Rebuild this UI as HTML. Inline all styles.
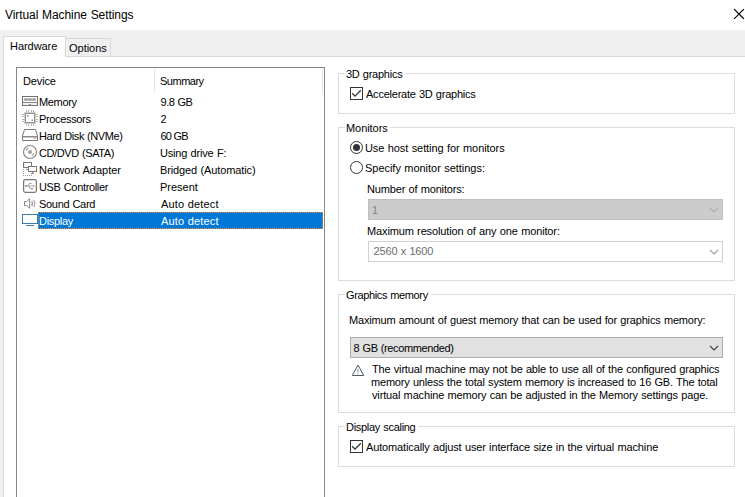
<!DOCTYPE html>
<html lang="en">
<head>
<meta charset="utf-8">
<title>Virtual Machine Settings</title>
<style>
html,body{margin:0;padding:0;}
body{width:745px;height:497px;overflow:hidden;background:#fff;position:relative;font-family:"Liberation Sans",Arial,sans-serif;font-size:11px;color:#000;}
*{box-sizing:border-box;}
div,span,svg,label{position:absolute;}
svg{overflow:visible;}
.t{white-space:pre;line-height:14px;height:14px;word-spacing:0.45px;}
.window{left:0;top:0;width:745px;height:497px;overflow:hidden;}
.titlebar{left:0;top:0;width:745px;height:30px;background:#fff;}
.title{font-size:12px;}
.client{left:0;top:30px;width:745px;height:467px;background:#f0f0f0;}
.tabpage{left:3px;top:26px;width:745px;height:445px;background:#fff;border-left:1px solid #d9d9d9;border-top:1px solid #d9d9d9;}
.tab{border:1px solid #d9d9d9;border-bottom:none;}
.tab.active{left:3px;top:6px;width:63px;height:21px;background:#fff;}
.tab.inactive{left:65px;top:8px;width:46px;height:18px;background:#f0f0f0;}
.listview{left:12px;top:10px;width:309px;height:440px;border:1px solid #828790;background:#fff;}
.lv-header{left:0;top:0;width:307px;height:25px;}
.colsep{width:1px;top:1px;height:24px;background:#e5e5e5;}
.lv-row{left:0;width:307px;height:17px;}
.lv-row .hl{left:21px;top:0;width:285px;height:17px;background:#0078d7;border:1px dotted #ff8728;}
.lv-row.selected .t{color:#fff;}
.icon{width:16px;height:16px;}
.group{left:334px;width:397px;border:1px solid #dcdcdc;}
.legend-gap{left:6px;top:-2px;height:3px;background:#fff;}
.chk{left:11px;width:13px;height:13px;border:1px solid #333;background:#fff;}
.radio{left:11px;width:13px;height:13px;border:1px solid #333;border-radius:50%;background:#fff;}
.radio.on:after{content:"";position:absolute;left:2px;top:2px;width:7px;height:7px;border-radius:50%;background:#333;}
.combo{height:21px;border:1px solid #adadad;background:#e1e1e1;}
.combo.disabled{background:#ccc;border-color:#bfbfbf;color:#838383;}
.combo.readonly{background:#fff;border-color:#d0d0d0;color:#6d6d6d;}
.chev{right:3px;top:8px;}
</style>
</head>
<body>
<div class="window">
<div class="titlebar">
<span class="t title" style="left:5px;top:8px;letter-spacing:-0.067px;">Virtual Machine Settings</span>
<svg class="closebtn" style="left:734px;top:9px" width="11" height="11" viewBox="0 0 11 11"><path d="M0.500 0.500 L9.500 9.500 M9.500 0.500 L0.500 9.500" stroke="#000" stroke-width="1.100" stroke-linecap="square" fill="none"/></svg>
</div>
<div class="client">
<div class="tabpage">
<div class="listview">
<div class="lv-header">
<span class="t col" style="left:6px;top:6px;letter-spacing:-0.137px;">Device</span>
<div class="colsep" style="left:137px"></div>
<span class="t col" style="left:143px;top:6px;letter-spacing:-0.495px;">Summary</span>
<div class="colsep" style="left:305px"></div>
</div>
<div class="lv-row" style="top:25px">
<svg class="icon" style="left:5px;top:0px" viewBox="0 0 16 16"><rect x="0.5" y="3.5" width="15" height="9" fill="#fff" stroke="#707070"/><rect x="2" y="5" width="12" height="3" fill="#dedede"/><g fill="#b9b9b9"><rect x="2.200" y="5" width="3.300" height="3"/><rect x="6.300" y="5" width="3.300" height="3"/><rect x="10.400" y="5" width="3.300" height="3"/></g><g fill="#9a9a9a"><rect x="2.200" y="6" width="3.300" height="1"/><rect x="6.300" y="6" width="3.300" height="1"/><rect x="10.400" y="6" width="3.300" height="1"/></g><rect x="1" y="9" width="14" height="1" fill="#8c8c8c"/><rect x="1" y="10" width="14" height="2" fill="#eef1f4"/><rect x="7" y="11" width="2" height="1" fill="#8a8a8a"/></svg>
<span class="t dev" style="left:22px;top:2px;letter-spacing:-0.356px;">Memory</span>
<span class="t sum" style="left:143.6px;top:2px;letter-spacing:-0.475px;">9.8 GB</span>
</div>
<div class="lv-row" style="top:42px">
<svg class="icon" style="left:5px;top:0px" viewBox="0 0 16 16"><g fill="#b4b4b4"><rect x="4" y="0" width="1" height="2"/><rect x="6" y="0" width="1" height="2"/><rect x="9" y="0" width="1" height="2"/><rect x="11" y="0" width="1" height="2"/><rect x="4" y="14" width="1" height="2"/><rect x="6" y="14" width="1" height="2"/><rect x="9" y="14" width="1" height="2"/><rect x="11" y="14" width="1" height="2"/><rect x="0" y="4" width="2" height="1"/><rect x="0" y="6" width="2" height="1"/><rect x="0" y="9" width="2" height="1"/><rect x="0" y="11" width="2" height="1"/><rect x="14" y="4" width="2" height="1"/><rect x="14" y="6" width="2" height="1"/><rect x="14" y="9" width="2" height="1"/><rect x="14" y="11" width="2" height="1"/></g><rect x="2.5" y="2.5" width="11" height="11" fill="#fff" stroke="#cfcfcf"/><rect x="3.5" y="3.5" width="9" height="9" fill="#fff" stroke="#929292"/><rect x="5" y="5" width="1.600" height="1.600" fill="#9c9c9c"/><rect x="9.400" y="9.400" width="1.600" height="1.600" fill="#9c9c9c"/></svg>
<span class="t dev" style="left:22px;top:2px;letter-spacing:-0.343px;">Processors</span>
<span class="t sum" style="left:143.6px;top:2px;">2</span>
</div>
<div class="lv-row" style="top:59px">
<svg class="icon" style="left:5px;top:0px" viewBox="0 0 16 16"><path d="M2.5 2.500 H13.500 L15.500 9 V13.500 H0.500 V9 Z" fill="#fff" stroke="#7a7a7a"/><rect x="1" y="9" width="14" height="1" fill="#8c8c8c"/><rect x="1" y="10" width="14" height="1" fill="#c4c4c4"/><rect x="11.500" y="11" width="2.500" height="1" fill="#b0b0b0"/></svg>
<span class="t dev" style="left:22px;top:2px;letter-spacing:-0.415px;">Hard Disk (NVMe)</span>
<span class="t sum" style="left:143.6px;top:2px;letter-spacing:-0.907px;">60 GB</span>
</div>
<div class="lv-row" style="top:76px">
<svg class="icon" style="left:5px;top:0px" viewBox="0 0 16 16"><circle cx="8" cy="8" r="6.500" fill="#fff" stroke="#868686" stroke-width="1.150"/><circle cx="8" cy="8" r="2" fill="#a2a2a2"/><path d="M4.100 6.600 A4.200 4.200 0 0 1 6.300 4.200" fill="none" stroke="#8e8e8e" stroke-width="1.100"/><path d="M11.900 9.400 A4.200 4.200 0 0 1 9.700 11.800" fill="none" stroke="#8e8e8e" stroke-width="1.100"/></svg>
<span class="t dev" style="left:22px;top:2px;letter-spacing:-0.389px;">CD/DVD (SATA)</span>
<span class="t sum" style="left:143px;top:2px;letter-spacing:-0.175px;">Using drive F:</span>
</div>
<div class="lv-row" style="top:93px">
<svg class="icon" style="left:5px;top:0px" viewBox="0 0 16 16"><rect x="1.500" y="1.500" width="8" height="5" fill="#fff" stroke="#787878"/><rect x="4" y="8" width="2" height="1" fill="#909090"/><rect x="6.500" y="5.500" width="8" height="5" fill="#fff" stroke="#787878"/><rect x="10" y="11" width="1" height="1" fill="#888"/><rect x="9" y="12" width="3" height="1" fill="#8c8c8c"/><g fill="#9c9c9c"><rect x="1" y="8" width="1" height="1"/><rect x="1" y="10" width="1" height="1"/><rect x="1" y="12" width="1" height="1"/><rect x="1" y="14" width="1" height="1"/><rect x="3" y="14" width="1" height="1"/><rect x="5" y="14" width="1" height="1"/><rect x="7" y="14" width="1" height="1"/><rect x="9" y="14" width="1" height="1"/></g></svg>
<span class="t dev" style="left:22px;top:2px;letter-spacing:0.018px;">Network Adapter</span>
<span class="t sum" style="left:143px;top:2px;letter-spacing:-0.117px;">Bridged (Automatic)</span>
</div>
<div class="lv-row" style="top:110px">
<svg class="icon" style="left:5px;top:0px" viewBox="0 0 16 16"><rect x="1.600" y="1.600" width="12.800" height="12.800" rx="1.800" fill="#fff" stroke="#787878" stroke-width="1.250"/><path d="M4 8 H12" stroke="#a8a8a8" fill="none"/><path d="M5.800 8 L7.300 5.500 H9.500" stroke="#9a9a9a" fill="none"/><path d="M6.800 8 L8.300 10.700 H10.500" stroke="#9a9a9a" fill="none"/><circle cx="4" cy="8" r="1" fill="#909090"/><path d="M11 6.800 L12.800 8 L11 9.200 Z" fill="#909090"/><rect x="9.500" y="10" width="1.500" height="1.500" fill="#a0a0a0"/></svg>
<span class="t dev" style="left:22px;top:2px;letter-spacing:-0.34px;">USB Controller</span>
<span class="t sum" style="left:143px;top:2px;letter-spacing:-0.003px;">Present</span>
</div>
<div class="lv-row" style="top:127px">
<svg class="icon" style="left:5px;top:0px" viewBox="0 0 16 16"><path d="M2.500 6.500 H4.700 L7.700 3.700 V13.300 L4.700 10.500 H2.500 Z" fill="#fff" stroke="#858585"/><path d="M9.800 6 Q11.100 8.500 9.800 11" fill="none" stroke="#8e8e8e" stroke-width="1.100"/><path d="M11.700 4.800 Q14 8.500 11.700 12.200" fill="none" stroke="#a2a2a2" stroke-width="1.100"/></svg>
<span class="t dev" style="left:22px;top:2px;letter-spacing:-0.312px;">Sound Card</span>
<span class="t sum" style="left:144px;top:2px;letter-spacing:0.14px;">Auto detect</span>
</div>
<div class="lv-row selected" style="top:144px">
<div class="hl"></div>
<svg class="icon" style="left:5px;top:0px" viewBox="0 0 16 16"><rect x="0.5" y="2.5" width="15" height="9" fill="#fff" stroke="#3c78b4"/><rect x="4" y="13" width="8" height="1" fill="#3c78b4"/></svg>
<span class="t dev" style="left:22px;top:2px;letter-spacing:-0.297px;">Display</span>
<span class="t sum" style="left:144px;top:2px;letter-spacing:0.14px;">Auto detect</span>
</div>
</div>
<div class="group" style="top:16px;height:41px">
<div class="legend-gap" style="width:60px"></div>
<span class="t legend" style="left:7px;top:-7px;letter-spacing:-0.246px;">3D graphics</span>
<div class="chk" style="top:13px"><svg style="left:0;top:0" width="11" height="11" viewBox="0 0 11 11"><path d="M1.200 5.300 L4 8.100 L9.800 2.300" fill="none" stroke="#333" stroke-width="1.300"/></svg></div>
<label class="t lbl" style="left:27px;top:13px;letter-spacing:-0.228px;">Accelerate 3D graphics</label>
</div>
<div class="group" style="top:70px;height:154px">
<div class="legend-gap" style="width:45px"></div>
<span class="t legend" style="left:7px;top:-7px;letter-spacing:-0.055px;">Monitors</span>
<div class="radio on" style="top:13px"></div>
<label class="t lbl" style="left:26px;top:13px;letter-spacing:-0.077px;">Use host setting for monitors</label>
<div class="radio" style="top:33px"></div>
<label class="t lbl" style="left:26px;top:33px;letter-spacing:-0.032px;">Specify monitor settings:</label>
<label class="t lbl" style="left:28px;top:54px;letter-spacing:-0.161px;">Number of monitors:</label>
<div class="combo disabled" style="left:29px;top:71px;width:355px">
<span class="t val" style="left:3px;top:3px;">1</span>
<svg class="chev" width="9" height="6" viewBox="0 0 9 6"><path d="M0 0 L4 4 L8 0" fill="none" stroke="#adadad" stroke-width="1.100"/></svg>
</div>
<label class="t lbl" style="left:28px;top:96px;letter-spacing:-0.134px;">Maximum resolution of any one monitor:</label>
<div class="combo readonly" style="left:29px;top:113px;width:355px">
<span class="t val" style="left:4.6px;top:2px;letter-spacing:-0.171px;">2560 x 1600</span>
<svg class="chev" width="9" height="6" viewBox="0 0 9 6"><path d="M0 0 L4 4 L8 0" fill="none" stroke="#9a9a9a" stroke-width="1.100"/></svg>
</div>
</div>
<div class="group" style="top:237px;height:119px">
<div class="legend-gap" style="width:86px"></div>
<span class="t legend" style="left:7px;top:-7px;letter-spacing:-0.363px;">Graphics memory</span>
<label class="t lbl" style="left:10px;top:18px;letter-spacing:-0.171px;">Maximum amount of guest memory that can be used for graphics memory:</label>
<div class="combo" style="left:11px;top:42px;width:373px">
<span class="t val" style="left:2.6px;top:3px;letter-spacing:-0.378px;">8 GB (recommended)</span>
<svg class="chev" width="9" height="6" viewBox="0 0 9 6"><path d="M0 0 L4 4 L8 0" fill="none" stroke="#404040" stroke-width="1.100"/></svg>
</div>
<svg class="warn" style="left:12px;top:68px" width="14" height="14" viewBox="0 0 14 14"><path d="M7 2 L1.300 12.500 H12.700 Z" fill="#fff" stroke="#4a5a66" stroke-width="1" stroke-linejoin="round"/><rect x="6.500" y="6" width="1" height="3.500" fill="#7f8c97"/><rect x="6.500" y="10.300" width="1" height="1" fill="#7f8c97"/></svg>
<span class="t note" style="left:33px;top:67px;letter-spacing:-0.171px;">The virtual machine may not be able to use all of the configured graphics</span>
<span class="t note" style="left:32px;top:80px;letter-spacing:-0.19px;">memory unless the total system memory is increased to 16 GB. The total</span>
<span class="t note" style="left:33px;top:93px;letter-spacing:-0.153px;">virtual machine memory can be adjusted in the Memory settings page.</span>
</div>
<div class="group" style="top:369px;height:41px">
<div class="legend-gap" style="width:73px"></div>
<span class="t legend" style="left:7px;top:-7px;letter-spacing:-0.292px;">Display scaling</span>
<div class="chk" style="top:13px"><svg style="left:0;top:0" width="11" height="11" viewBox="0 0 11 11"><path d="M1.200 5.300 L4 8.100 L9.800 2.300" fill="none" stroke="#333" stroke-width="1.300"/></svg></div>
<label class="t lbl" style="left:27px;top:13px;letter-spacing:-0.137px;">Automatically adjust user interface size in the virtual machine</label>
</div>
</div>
<div class="tab inactive">
<span class="t tabtxt" style="left:3px;top:2px;letter-spacing:-0.022px;">Options</span>
</div>
<div class="tab active">
<span class="t tabtxt" style="left:6px;top:2px;letter-spacing:-0.054px;">Hardware</span>
</div>
</div>
</div>
</body>
</html>
